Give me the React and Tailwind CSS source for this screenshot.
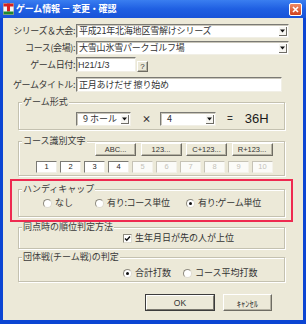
import React from "react";

function Arrow() {
  return (
    <span className="w-[8px] h-[9px] mr-[1px] shrink-0 flex items-center justify-center bg-[#f7f6f2] border-r border-b border-[#6f6d66]">
      <svg width="5" height="4" viewBox="0 0 5 4">
        <path d="M0 0.5h5L2.5 3.5z" fill="#111" />
      </svg>
    </span>
  );
}

function Sunken({ className = "", children }) {
  return (
    <div
      className={
        "bg-white border border-t-[#7b7a74] border-l-[#7b7a74] border-b-[#f1efe6] border-r-[#f1efe6] shadow-[inset_1px_1px_0_#c9c6ba] flex items-center " +
        className
      }
    >
      {children}
    </div>
  );
}

function Raised({ className = "", children }) {
  return (
    <div
      className={
        "bg-[#ECE9D8] border border-t-[#ffffff] border-l-[#ffffff] border-b-[#6e6c63] border-r-[#6e6c63] shadow-[inset_-1px_-1px_0_#b5b2a3] flex items-center justify-center " +
        className
      }
    >
      {children}
    </div>
  );
}

function Group({ label, className = "", children }) {
  return (
    <fieldset
      className={
        "border border-[#c4c1b0] shadow-[inset_1px_1px_0_#ffffff,1px_1px_0_#ffffff] " +
        className
      }
    >
      <legend className="ml-[3px] px-[1px] bg-[#ECE9D8] text-[9px] leading-[10px] text-[#3a3a3a]">
        {label}
      </legend>
      {children}
    </fieldset>
  );
}

function Radio({ checked }) {
  return (
    <span className="w-[9px] h-[9px] rounded-full bg-white border border-t-[#8e8b7f] border-l-[#8e8b7f] border-b-[#dedbd0] border-r-[#dedbd0] flex items-center justify-center shrink-0">
      {checked && <span className="w-[3px] h-[3px] rounded-full bg-[#111]" />}
    </span>
  );
}

function Row({ label, className = "", children }) {
  return (
    <div className={"flex items-center " + className}>
      <div className="w-[73px] pr-[1px] text-right whitespace-nowrap tracking-[-0.4px] text-[#363636]">
        {label}
      </div>
      {children}
    </div>
  );
}

export default function App() {
  const boxes = ["1", "2", "3", "4", "5", "6", "7", "8", "9", "10"];
  return (
    <div className="w-[306px] h-[324px] flex flex-col bg-[#0b45d3] font-['Noto_Sans_CJK_JP','Noto_Sans',sans-serif] text-[#333] overflow-hidden">
      {/* title bar */}
      <div className="h-[18px] shrink-0 flex items-center pl-[3px] bg-gradient-to-b from-[#3a7ef0] via-[#1f5fe2] to-[#1853d8]">
        <svg width="11" height="12" viewBox="0 0 11 12" className="shrink-0">
          <rect x="0" y="0" width="11" height="12" fill="#f4f4f4" />
          <rect x="0.5" y="0.5" width="10" height="3" fill="#d62020" />
          <rect x="4" y="0.5" width="3" height="8" fill="#d62020" />
          <rect x="0.5" y="8.5" width="10" height="3" fill="#1f8a2e" />
          <rect x="0" y="0" width="11" height="12" fill="none" stroke="#555" strokeWidth="0.6" />
        </svg>
        <span className="ml-[2px] text-white text-[9px] leading-[10px] font-semibold tracking-[-0.2px] whitespace-nowrap">
          ゲーム情報 － 変更・確認
        </span>
        <div className="ml-auto mr-[4px] w-[13px] h-[13px] rounded-[2px] border border-white bg-gradient-to-b from-[#ef8a62] to-[#cf3f1c] flex items-center justify-center">
          <svg width="7" height="7" viewBox="0 0 7 7">
            <path d="M1 1L6 6M6 1L1 6" stroke="#fff" strokeWidth="1.6" />
          </svg>
        </div>
      </div>

      {/* body */}
      <div className="flex-1 mx-[3px] mb-[4px] bg-[#ECE9D8] flex flex-col text-[9px] leading-[10px]">
        <Row label="シリーズ＆大会:" className="mt-[6px]">
          <Sunken className="w-[213px] h-[14px]">
            <span className="flex-1 pl-[2px] whitespace-nowrap tracking-[-0.2px]">
              平成21年北海地区雪解けシリーズ
            </span>
            <Arrow />
          </Sunken>
        </Row>
        <Row label="コース(会場):" className="mt-[3px]">
          <Sunken className="w-[213px] h-[14px]">
            <span className="flex-1 pl-[2px] whitespace-nowrap tracking-[-0.2px]">
              大雪山氷雪パークゴルフ場
            </span>
            <Arrow />
          </Sunken>
        </Row>
        <div className="flex items-end mt-[2px]">
          <div className="w-[73px] pr-[1px] text-right whitespace-nowrap tracking-[-0.4px] text-[#363636] self-center">
            ゲーム日付:
          </div>
          <Sunken className="w-[60px] h-[15px]">
            <span className="pl-[1px] font-['Liberation_Sans',sans-serif] text-[9px]">H21/1/3</span>
          </Sunken>
          <Raised className="ml-[1px] w-[11px] h-[11px] text-[8px] font-['Liberation_Sans',sans-serif]">
            ?
          </Raised>
        </div>
        <Row label="ゲームタイトル:" className="mt-[5px]">
          <Sunken className="w-[206px] h-[15px]">
            <span className="pl-[2px] whitespace-nowrap tracking-[-0.2px]">正月あけだぜ 擦り始め</span>
          </Sunken>
        </Row>

        {/* ゲーム形式 */}
        <Group label="ゲーム形式" className="ml-[15px] w-[267px] mt-[5px]">
          <div className="flex items-center mt-[5px] pb-[3px] pl-[57px]">
            <Sunken className="w-[55px] h-[14px]">
              <span className="flex-1 pl-[6px] whitespace-nowrap">9 ホール</span>
              <Arrow />
            </Sunken>
            <span className="ml-[11px] text-[9px] font-bold">×</span>
            <Sunken className="ml-[9px] w-[56px] h-[14px]">
              <span className="flex-1 pl-[6px]">4</span>
              <Arrow />
            </Sunken>
            <span className="ml-[11px] font-['Liberation_Sans',sans-serif] text-[10px]">=</span>
            <span className="ml-[12px] font-['Liberation_Sans',sans-serif] text-[13px] leading-[14px] text-[#1a1a1a]">
              36H
            </span>
          </div>
        </Group>

        {/* コース識別文字 */}
        <Group label="コース識別文字" className="ml-[15px] w-[267px] mt-[6px]">
          <div className="flex gap-[4.5px] pl-[76px] mt-[-3px]">
            {["ABC...", "123...", "C+123...", "R+123..."].map((t) => (
              <Raised
                key={t}
                className="w-[41px] h-[13px] font-['Liberation_Sans',sans-serif] text-[7.5px] text-[#333]"
              >
                {t}
              </Raised>
            ))}
          </div>
          <div className="flex gap-[3px] pl-[17px] mt-[5px] pb-[2px]">
            {boxes.map((b, i) => (
              <div
                key={b}
                className={
                  i < 4
                    ? "w-[21px] h-[12px] bg-white border border-t-[#7b7a74] border-l-[#7b7a74] border-b-[#f1efe6] border-r-[#f1efe6] flex items-center justify-center font-['Liberation_Sans',sans-serif] text-[7.5px] text-[#222]"
                    : "w-[21px] h-[12px] bg-[#fbfbf8] border border-t-[#c6c3b6] border-l-[#c6c3b6] border-b-[#f4f2ea] border-r-[#f4f2ea] flex items-center justify-center font-['Liberation_Sans',sans-serif] text-[7.5px] text-[#c4c2b8]"
                }
              >
                {b}
              </div>
            ))}
          </div>
        </Group>

        {/* ハンディキャップ (with red highlight) */}
        <div className="relative ml-[15px] w-[267px] mt-[8px]">
          <Group label="ハンディキャップ" className="w-full">
            <div className="flex items-center mt-[4px] pb-[8px] pl-[24px] h-[10px] box-content">
              <div className="w-[52px] flex items-center">
                <Radio />
                <span className="ml-[3px] whitespace-nowrap">なし</span>
              </div>
              <div className="w-[91px] flex items-center">
                <Radio />
                <span className="ml-[3px] whitespace-nowrap tracking-[-0.3px]">有り:コース単位</span>
              </div>
              <div className="flex items-center">
                <Radio checked />
                <span className="ml-[3px] whitespace-nowrap tracking-[-0.3px]">有り:ゲーム単位</span>
              </div>
            </div>
          </Group>
          <div className="absolute -left-[8px] -right-[8px] -top-[5px] -bottom-[5px] border-2 border-[#ee2a50] pointer-events-none" />
        </div>

        {/* 同点時の順位判定方法 */}
        <Group label="同点時の順位判定方法" className="ml-[15px] w-[267px] mt-[5px]">
          <div className="flex items-center mt-[1px] pb-[5px] pl-[104px] h-[10px] box-content">
            <span className="w-[9px] h-[9px] bg-white border border-t-[#8e8b7f] border-l-[#8e8b7f] border-b-[#dedbd0] border-r-[#dedbd0] flex items-center justify-center shrink-0">
              <svg width="7" height="7" viewBox="0 0 7 7">
                <path d="M1 3.5L2.8 5.3L6 1.5" stroke="#111" strokeWidth="1.4" fill="none" />
              </svg>
            </span>
            <span className="ml-[3px] whitespace-nowrap">生年月日が先の人が上位</span>
          </div>
        </Group>

        {/* 団体戦 */}
        <Group label="団体戦(チーム戦)の判定" className="ml-[15px] w-[267px] mt-[3px]">
          <div className="flex items-center mt-[6px] pb-[3px] pl-[104px] h-[10px] box-content">
            <div className="w-[60px] flex items-center">
              <Radio checked />
              <span className="ml-[3px] whitespace-nowrap">合計打数</span>
            </div>
            <div className="flex items-center">
              <Radio />
              <span className="ml-[3px] whitespace-nowrap">コース平均打数</span>
            </div>
          </div>
        </Group>

        {/* buttons */}
        <div className="flex mt-[12px] pl-[142px]">
          <div className="w-[70px] h-[17px] border border-[#3c3c3c] flex">
            <div className="flex-1 bg-[#ECE9D8] border border-t-[#ffffff] border-l-[#ffffff] border-b-[#7a786e] border-r-[#7a786e] flex items-center justify-center font-['Liberation_Sans',sans-serif] text-[8.5px] text-[#333]">
              OK
            </div>
          </div>
          <Raised className="ml-[8px] w-[49px] h-[17px] text-[8.5px] text-[#333] shadow-[inset_-1px_-1px_0_#b5b2a3,1px_1px_0_#3c3c3c]">
            ｷｬﾝｾﾙ
          </Raised>
        </div>
      </div>
    </div>
  );
}
